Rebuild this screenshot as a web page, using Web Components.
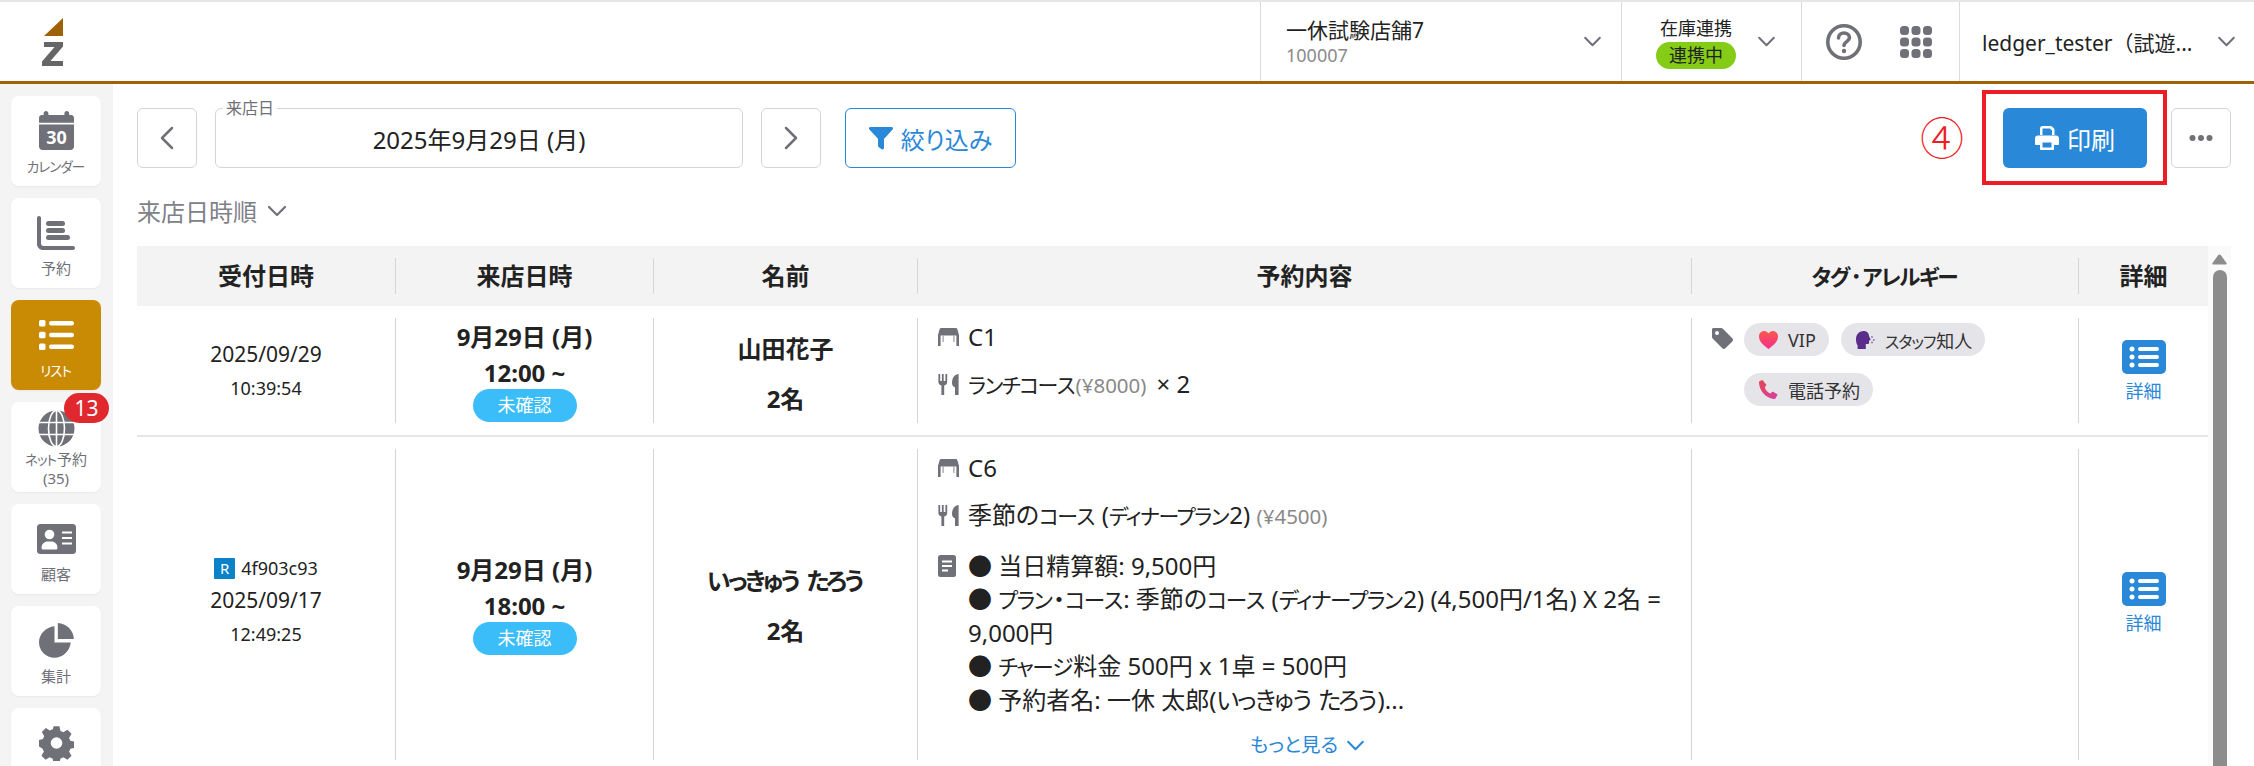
<!DOCTYPE html>
<html lang="ja">
<head>
<meta charset="utf-8">
<title>リスト</title>
<style>
    html, body {
        margin: 0;
        height: 766px;
        overflow: hidden;
        background: #fff;
        color: #222;
        font-family: "Noto Sans", "Noto Sans CJK JP", sans-serif;
        font-feature-settings: "palt";
    }

    .page {
        display: flex;
        height: 682px;
        overflow: hidden;
    }

    .main {
        flex: 1;
        min-width: 0;
        display: flex;
        flex-direction: column;
        padding: 24px 23px 0 24px;
    }
</style>
</head>
<body>
<z-header></z-header>
<div class="page">
    <z-sidenav>
        <z-nav-item label="カレンダー" icon="calendar"></z-nav-item>
        <z-nav-item label="予約" icon="chart"></z-nav-item>
        <z-nav-item label="リスト" icon="list" active></z-nav-item>
        <z-nav-item label="ネット予約" sub="(35)" icon="globe" badge="13"></z-nav-item>
        <z-nav-item label="顧客" icon="card"></z-nav-item>
        <z-nav-item label="集計" icon="pie"></z-nav-item>
        <z-nav-item icon="gear"></z-nav-item>
    </z-sidenav>
    <div class="main">
        <z-toolbar></z-toolbar>
        <z-sort></z-sort>
        <z-table>
            <z-row
                received="2025/09/29" time="10:39:54"
                visit="9月29日 (月)" hour="12:00 ~"
                name="山田花子" guests="2名" height="105">
                <z-seat>C1</z-seat>
                <z-course price="(¥8000)" qty="× 2">ランチコース</z-course>
                <z-tags slot="tags">
                    <z-tag kind="heart">VIP</z-tag>
                    <z-tag kind="head">スタッフ知人</z-tag>
                    <z-tag kind="phone">電話予約</z-tag>
                </z-tags>
            </z-row>
            <z-row
                ref="4f903c93"
                received="2025/09/17" time="12:49:25"
                visit="9月29日 (月)" hour="18:00 ~"
                name="いっきゅう たろう" guests="2名" height="306">
                <z-seat>C6</z-seat>
                <z-course price="(¥4500)">季節のコース (ディナープラン2)</z-course>
                <z-note>
                    <div>● 当日精算額: 9,500円</div>
                    <div>● プラン・コース: 季節のコース (ディナープラン2) (4,500円/1名) X 2名 = <span>9,000円</span></div>
                    <div>● チャージ料金 500円 x 1卓 = 500円</div>
                    <div>● 予約者名: 一休 太郎(いっきゅう たろう)...</div>
                </z-note>
            </z-row>
        </z-table>
    </div>
</div>

<script>
// kana in the reference are smaller and narrower than in the installed CJK font
const tight = (s) => s
    .replace(/[ァ-ヶー]+/g, (m) => `<span style="font-size:var(--kana,.9em)"><span style="letter-spacing:-.07em">${m.slice(0, -1)}</span>${m.slice(-1)}</span>`)
    .replace(/[ぁ-ん]+/g, (m) => `<span style="letter-spacing:var(--hira,-.07em)">${m.slice(0, -1)}</span>${m.slice(-1)}`);

const chevron = (size = 19, color = "#6f7078") => `
    <svg width="${size}" height="${Math.round(size * 0.6)}" viewBox="0 0 20 12" fill="none" stroke="${color}" stroke-width="2.2" stroke-linecap="round" stroke-linejoin="round"><path d="M2 2l8 8 8-8"/></svg>`;

const navIcons = {
    calendar: `<svg width="35" height="39" viewBox="0 0 35 39"><path fill="currentColor" d="M7 0c1.4 0 2.4 1 2.4 2.4V4h16V2.400c0-1.400 1-2.400 2.400-2.400s2.400 1 2.400 2.400V4H32c1.700 0 3 1.300 3 3v4.800H0V7c0-1.700 1.300-3 3-3h1.600V2.400C4.600 1 5.600 0 7 0zM0 13.400h35V35.500c0 1.900-1.500 3.500-3.500 3.500h-28C1.500 39 0 37.400 0 35.500z"/><text x="17.500" y="33" text-anchor="middle" font-size="18" font-weight="700" fill="#fff" font-family="Noto Sans, sans-serif">30</text></svg>`,
    chart: `<svg width="38" height="34" viewBox="0 0 38 34" fill="currentColor"><path d="M2 0c1.100 0 2 .9 2 2v25.500c0 1.400 1.100 2.500 2.500 2.500H36c1.100 0 2 .9 2 2s-.9 2-2 2H6c-3.300 0-6-2.700-6-6V2C0 .9.900 0 2 0z"/><rect x="9" y="5" width="19" height="5" rx="2.500"/><rect x="9" y="12" width="19" height="5" rx="2.500"/><rect x="9" y="19" width="24" height="5" rx="2.500"/></svg>`,
    list: `<svg width="35" height="30" viewBox="0 0 35 30" fill="currentColor"><rect x="0" y="0" width="6.500" height="6.500" rx="1.500"/><rect x="0" y="11.800" width="6.500" height="6.500" rx="1.500"/><rect x="0" y="23.500" width="6.500" height="6.500" rx="1.500"/><rect x="10" y="1" width="25" height="4.500" rx="2.200"/><rect x="10" y="12.800" width="25" height="4.500" rx="2.200"/><rect x="10" y="24.500" width="25" height="4.500" rx="2.200"/></svg>`,
    globe: `<svg width="37" height="37" viewBox="0 0 37 37"><circle cx="18.500" cy="18.500" r="18" fill="currentColor"/><g fill="none" stroke="#fff" stroke-width="1.600"><ellipse cx="18.500" cy="18.500" rx="8" ry="18"/><path d="M0 12.500h37M0 24.500h37M18.500 0v37"/></g></svg>`,
    card: `<svg width="39" height="30" viewBox="0 0 39 30"><rect width="39" height="30" rx="3.500" fill="currentColor"/><circle cx="12.500" cy="10.500" r="4.800" fill="#fff"/><path fill="#fff" d="M4.500 24c0-4.200 3-6.500 6-6.500h4c3 0 6 2.300 6 6.500 0 .8-.7 1.500-1.500 1.500H6c-.8 0-1.500-.7-1.500-1.500z"/><path stroke="#fff" stroke-width="1.800" d="M25 8.500h10M25 14h10M25 19.500h10"/></svg>`,
    pie: `<svg width="35" height="35" viewBox="0 0 35 35" fill="currentColor"><path d="M15.500 3.200V19.500H31.800C30.900 28 23.800 34.800 15.500 34.800 6.900 34.800 0 27.900 0 19.300 0 11 6.900 4 15.500 3.200z"/><path d="M18.800 0C27.500.3 34.500 7.300 34.800 16H18.800z"/></svg>`,
    gear: `<svg width="35" height="36" viewBox="0 0 24 24" fill="currentColor"><path fill-rule="evenodd" d="M10 0.500h4l.7 3.200c.7.200 1.400.5 2 .9l2.800-1.700 2.800 2.800-1.700 2.800c.4.600.7 1.300.9 2l3.200.7v4l-3.200.7c-.2.700-.5 1.400-.9 2l1.700 2.800-2.800 2.800-2.800-1.700c-.6.400-1.300.7-2 .9l-.7 3.200h-4l-.7-3.200c-.7-.2-1.400-.5-2-.9l-2.800 1.700-2.800-2.800 1.700-2.800c-.4-.6-.7-1.300-.9-2L-.500 14v-4l3.200-.7c.2-.7.5-1.400.9-2L1.900 4.500l2.800-2.800 2.800 1.700c.6-.4 1.300-.7 2-.9zM12 8a4 4 0 100 8 4 4 0 000-8z"/></svg>`
};

class ZHeader extends HTMLElement {
    constructor() {
        super();
        this.attachShadow({ mode: "open" });
        this.shadowRoot.innerHTML = `
            <style>
                :host {
                    display: flex;
                    height: 84px;
                    box-sizing: border-box;
                    border-top: 2px solid #e6e6e6;
                    border-bottom: 3px solid #a06208;
                    background: #fff;
                }
                .logo { width: 1260px; padding: 16px 0 0 42px; box-sizing: border-box; }
                .logo svg { display: block; }
                .cell {
                    display: flex;
                    align-items: center;
                    box-sizing: border-box;
                    border-left: 1px solid #dcdcdc;
                }
                .store { width: 361px; padding: 0 19px 0 25px; justify-content: space-between; }
                .store b { display: block; font-weight: 400; font-size: 21px; line-height: 27px; }
                .store small { display: block; font-size: 18px; line-height: 22px; color: #8a8a8a; }
                .stock { width: 180px; padding: 0 25px 0 34px; justify-content: space-between; }
                .stock .col { display: flex; flex-direction: column; align-items: center; }
                .stock span { font-size: 18px; line-height: 28px; }
                .stock i {
                    font-style: normal;
                    font-size: 18px;
                    line-height: 27px;
                    width: 80px;
                    text-align: center;
                    border-radius: 14px;
                    background: #84cc16;
                }
                .help { width: 158px; padding-left: 24px; gap: 38px; }
                .user {
                    flex: 1;
                    padding: 0 18px 0 22px;
                    justify-content: space-between;
                    font-size: 21px;
                    font-feature-settings: normal;
                }
            </style>
            <div class="logo">
                <svg width="22" height="50" viewBox="0 0 22 50">
                    <path fill="#a06208" d="M21 0v18H2z"/>
                    <path fill="#666" d="M2 24h19v4.500L8.500 43H21v5H0v-4.500L12.500 29H2z"/>
                </svg>
            </div>
            <div class="cell store">
                <div><b>一休試験店舗7</b><small>100007</small></div>
                ${chevron()}
            </div>
            <div class="cell stock">
                <div class="col"><span>在庫連携</span><i>連携中</i></div>
                ${chevron()}
            </div>
            <div class="cell help">
                <svg width="36" height="36" viewBox="0 0 36 36" fill="none">
                    <circle cx="18" cy="18" r="16.200" stroke="#6f7078" stroke-width="3.600"/>
                    <path d="M12.500 14c0-3 2.500-5 5.500-5s5.500 2 5.500 4.800c0 3.700-5.500 4-5.500 7.700" stroke="#6f7078" stroke-width="3.600" stroke-linecap="round"/>
                    <circle cx="18" cy="27" r="2.200" fill="#6f7078"/>
                </svg>
                <svg width="32" height="32" viewBox="0 0 32 32" fill="#6f7078">
                    <rect x="0" y="0" width="9" height="9" rx="3.500"/><rect x="11.500" y="0" width="9" height="9" rx="3.500"/><rect x="23" y="0" width="9" height="9" rx="3.500"/>
                    <rect x="0" y="11.500" width="9" height="9" rx="3.500"/><rect x="11.500" y="11.500" width="9" height="9" rx="3.500"/><rect x="23" y="11.500" width="9" height="9" rx="3.500"/>
                    <rect x="0" y="23" width="9" height="9" rx="3.500"/><rect x="11.500" y="23" width="9" height="9" rx="3.500"/><rect x="23" y="23" width="9" height="9" rx="3.500"/>
                </svg>
            </div>
            <div class="cell user"><span>ledger_tester（試遊...</span>${chevron()}</div>
        `;
    }
}

class ZSidenav extends HTMLElement {
    constructor() {
        super();
        this.attachShadow({ mode: "open" });
        this.shadowRoot.innerHTML = `
            <style>
                :host {
                    display: flex;
                    flex-direction: column;
                    gap: 12px;
                    width: 113px;
                    flex: none;
                    box-sizing: border-box;
                    padding: 12px 0 0 11px;
                    background: #f4f4f4;
                }
            </style>
            <slot></slot>
        `;
    }
}

class ZNavItem extends HTMLElement {
    constructor() {
        super();
        this.attachShadow({ mode: "open" });
    }

    connectedCallback() {
        const badge = this.getAttribute("badge");
        const sub = this.getAttribute("sub");
        const label = this.getAttribute("label");
        this.shadowRoot.innerHTML = `
            <style>
                :host {
                    display: flex;
                    flex: none;
                    flex-direction: column;
                    align-items: center;
                    position: relative;
                    width: 90px;
                    height: 90px;
                    box-sizing: border-box;
                    padding-top: ${sub ? 7 : 15}px;
                    border-radius: 8px;
                    background: #fff;
                    color: #6f7078;
                    box-shadow: 0 1px 2px rgba(0,0,0,.05);
                    font-size: 15px;
                    line-height: 18px;
                }
                :host([active]) { background: #c98a04; color: #fff; }
                .ic { height: 39px; display: flex; align-items: center; justify-content: center; margin-bottom: ${sub ? 2 : 7}px; }
                .badge {
                    position: absolute;
                    left: 53px;
                    top: -9px;
                    width: 45px;
                    height: 30px;
                    border-radius: 15px;
                    background: #e0282e;
                    color: #fff;
                    font-size: 21px;
                    line-height: 30px;
                    text-align: center;
                }
            </style>
            <div class="ic">${navIcons[this.getAttribute("icon")]}</div>
            ${label ? `<div>${tight(label)}</div>` : ""}
            ${sub ? `<div>${sub}</div>` : ""}
            ${badge ? `<div class="badge">${badge}</div>` : ""}
        `;
    }
}

class ZToolbar extends HTMLElement {
    constructor() {
        super();
        this.attachShadow({ mode: "open" });
        this.shadowRoot.innerHTML = `
            <style>
                :host { display: flex; flex: none; height: 60px; align-items: stretch; }
                .btn {
                    display: flex;
                    align-items: center;
                    justify-content: center;
                    box-sizing: border-box;
                    width: 60px;
                    border: 1px solid #d4d4d4;
                    border-radius: 6px;
                    background: #fff;
                }
                .date {
                    position: relative;
                    width: 528px;
                    margin: 0 18px;
                    display: flex;
                    align-items: center;
                    justify-content: center;
                    box-sizing: border-box;
                    border: 1px solid #d4d4d4;
                    border-radius: 6px;
                    font-size: 24px;
                }
                .date label {
                    position: absolute;
                    left: 7px;
                    top: -11px;
                    padding: 0 3px;
                    background: #fff;
                    font-size: 16px;
                    line-height: 20px;
                    color: #6f7078;
                }
                .filter {
                    width: 171px;
                    margin-left: 24px;
                    gap: 8px;
                    border-color: #2a88d8;
                    color: #2a88d8;
                    font-size: 24px;
                }
                .mark {
                    margin-left: auto;
                    margin-right: 39px;
                    align-self: center;
                    color: #ee1c25;
                    font-size: 44px;
                    line-height: 48px;
                    font-weight: 300;
                }
                .print-wrap { position: relative; display: flex; width: 144px; margin-right: 24px; }
                .print {
                    width: 100%;
                    gap: 8px;
                    border: 0;
                    background: #2a88d8;
                    color: #fff;
                    font-size: 24px;
                }
                .ring {
                    position: absolute;
                    left: -21px;
                    right: -20px;
                    top: -18px;
                    bottom: -17px;
                    border: 4px solid #ee1c25;
                }
            </style>
            <div class="btn"><svg width="16" height="26" viewBox="0 0 16 26" fill="none" stroke="#6f7078" stroke-width="2.500" stroke-linecap="round" stroke-linejoin="round"><path d="M13 3L3 13l10 10"/></svg></div>
            <div class="date"><label>来店日</label>2025年9月29日 (月)</div>
            <div class="btn"><svg width="16" height="26" viewBox="0 0 16 26" fill="none" stroke="#6f7078" stroke-width="2.500" stroke-linecap="round" stroke-linejoin="round"><path d="M3 3l10 10L3 23"/></svg></div>
            <div class="btn filter">
                <svg width="24" height="24" viewBox="0 0 24 24" fill="#2a88d8"><path d="M1.500 1h21c1.300 0 2 1.500 1.100 2.500L15 13v9c0 1.200-1.400 1.900-2.400 1.200l-3-2.200c-.4-.3-.6-.7-.6-1.200v-7L.4 3.500C-.5 2.500.2 1 1.500 1z"/></svg>
                <span>絞り込み</span>
            </div>
            <div class="mark">④</div>
            <div class="print-wrap">
                <div class="btn print">
                    <svg width="24" height="24" viewBox="0 0 24 24" fill="#fff"><path d="M5 9V2.500C5 1.100 6.100 0 7.500 0h8c.7 0 1.300.3 1.800.7l1.500 1.500c.5.5.7 1.100.7 1.800v5h-2.500V4.500L15 2.500H7.500V9z"/><path d="M3 9.500h18c1.700 0 3 1.300 3 3V18c0 .6-.4 1-1 1h-4v4c0 .6-.4 1-1 1H6c-.6 0-1-.4-1-1v-4H1c-.6 0-1-.4-1-1v-5.500c0-1.700 1.300-3 3-3zM7.500 16.500v5h9v-5z"/></svg>
                    印刷
                </div>
                <div class="ring"></div>
            </div>
            <div class="btn more"><svg width="24" height="6" viewBox="0 0 24 6" fill="#6f7078"><circle cx="3.500" cy="3" r="3"/><circle cx="12" cy="3" r="3"/><circle cx="20.500" cy="3" r="3"/></svg></div>
        `;
    }
}

class ZSort extends HTMLElement {
    constructor() {
        super();
        this.attachShadow({ mode: "open" });
        this.shadowRoot.innerHTML = `
            <style>
                :host {
                    display: flex;
                    flex: none;
                    align-items: center;
                    gap: 10px;
                    height: 78px;
                    box-sizing: border-box;
                    padding-top: 7px;
                    color: #808188;
                    font-size: 24px;
                }
            </style>
            来店日時順 ${chevron(20)}
        `;
    }
}

class ZTable extends HTMLElement {
    constructor() {
        super();
        this.attachShadow({ mode: "open" });
        this.shadowRoot.innerHTML = `
            <style>
                :host {
                    display: flex;
                    flex: 1;
                    min-height: 0;
                    --cols: 258px 258px 264px 774px 387px 130px;
                }
                .body { width: 2071px; flex: none; }
                .head {
                    display: grid;
                    grid-template-columns: var(--cols);
                    height: 60px;
                    box-sizing: border-box;
                    padding: 12px 0;
                    background: #f3f3f3;
                    font-size: 24px;
                    font-weight: 700;
                    line-height: 35px;
                    text-align: center;
                }
                .head div + div { border-left: 1px solid #d5d5d5; }
                .bar {
                    flex: 1;
                    display: flex;
                    flex-direction: column;
                    align-items: center;
                    background: #fafafa;
                    padding-top: 8px;
                    gap: 5px;
                }
                .bar svg { flex: none; }
                .thumb { width: 14px; flex: 1; background: #8c8c8c; border-radius: 7px 7px 0 0; }
            </style>
            <div class="body">
                <div class="head">
                    <div>受付日時</div><div>来店日時</div><div>名前</div><div>予約内容</div><div>${tight("タグ･アレルギー")}</div><div>詳細</div>
                </div>
                <slot></slot>
            </div>
            <div class="bar">
                <svg width="15" height="11" viewBox="0 0 15 11" fill="#8c8c8c"><path d="M7.500.5c.5 0 .9.2 1.200.6l5.800 7.800c.5.800 0 1.600-.9 1.600H1.400c-.9 0-1.400-.8-.9-1.600L6.300 1.100c.3-.4.700-.6 1.200-.6z"/></svg>
                <div class="thumb"></div>
            </div>
        `;
    }
}

class ZRow extends HTMLElement {
    constructor() {
        super();
        this.attachShadow({ mode: "open" });
    }

    connectedCallback() {
        const ref = this.getAttribute("ref");
        this.shadowRoot.innerHTML = `
            <style>
                :host {
                    display: grid;
                    grid-template-columns: var(--cols);
                    padding: 12px 0;
                    border-bottom: 2px solid #e6e6e6;
                }
                .cell {
                    min-height: ${this.getAttribute("height")}px;
                    box-sizing: border-box;
                    display: flex;
                    flex-direction: column;
                    align-items: center;
                    justify-content: center;
                }
                .cell + .cell { border-left: 1px solid #d5d5d5; }
                .received { font-size: 21px; line-height: 30px; padding: ${ref ? "0 0 5px" : "4px 0 0"}; }
                .received .t { font-size: 18px; line-height: 35px; margin-top: 2px; }
                .ref { display: flex; align-items: center; gap: 6px; font-size: 18px; line-height: 33px; }
                .ref i {
                    width: 21px;
                    line-height: 21px;
                    font-style: normal;
                    font-size: 15px;
                    text-align: center;
                    border-radius: 1px;
                    background: #0a82c8;
                    color: #fff;
                }
                .visit { font-size: 24px; font-weight: 700; line-height: 36px; padding-bottom: ${ref ? 2 : 0}px; }
                .pill {
                    width: 104px;
                    height: 33px;
                    margin-top: -2px;
                    border-radius: 17px;
                    background: #3bbdf9;
                    color: #fff;
                    font-size: 18px;
                    font-weight: 400;
                    line-height: 33px;
                    text-align: center;
                }
                .who { --hira: -.11em; font-size: 24px; font-weight: 700; line-height: 36px; padding-top: ${ref ? 3 : 6}px; }
                .who div + div { margin-top: 14px; text-align: center; }
                .plan { align-items: stretch; justify-content: flex-start; padding-left: 20px; padding-right: 14px; }
                .tags { align-items: flex-start; justify-content: flex-start; padding: 5px 0 0 20px; }
                .more {
                    align-self: center;
                    display: flex;
                    align-items: center;
                    gap: 8px;
                    margin-top: 14px;
                    color: #2a88d8;
                    font-size: 19.500px;
                    line-height: 30px;
                }
                .detail { color: #2a88d8; font-size: 18px; line-height: 26px; gap: 4px; padding: ${ref ? "0 0 2px" : "2px 0 0"}; }
                svg { display: block; }
            </style>
            <div class="cell received">
                ${ref ? `<div class="ref"><i>R</i>${ref}</div>` : ""}
                <div>${this.getAttribute("received")}</div>
                <div class="t">${this.getAttribute("time")}</div>
            </div>
            <div class="cell visit">
                <div>${this.getAttribute("visit")}</div>
                <div>${this.getAttribute("hour")}</div>
                <div class="pill">未確認</div>
            </div>
            <div class="cell who">
                <div>${tight(this.getAttribute("name"))}</div>
                <div>${this.getAttribute("guests")}</div>
            </div>
            <div class="cell plan">
                <slot></slot>
                ${ref ? `<div class="more">もっと見る ${chevron(19, "#2a88d8")}</div>` : ""}
            </div>
            <div class="cell tags"><slot name="tags"></slot></div>
            <div class="cell detail">
                <svg width="44" height="34" viewBox="0 0 44 34">
                    <rect width="44" height="34" rx="5" fill="#2a88d8"/>
                    <g fill="#fff"><circle cx="10" cy="9" r="2.500"/><circle cx="10" cy="17" r="2.500"/><circle cx="10" cy="25" r="2.500"/>
                    <rect x="16" y="7" width="21" height="4" rx="2"/><rect x="16" y="15" width="21" height="4" rx="2"/><rect x="16" y="23" width="21" height="4" rx="2"/></g>
                </svg>
                詳細
            </div>
        `;
    }
}

class ZSeat extends HTMLElement {
    constructor() {
        super();
        this.attachShadow({ mode: "open" });
        this.shadowRoot.innerHTML = `
            <style>
                :host { display: flex; align-items: center; gap: 9px; height: 36px; margin-top: 1px; font-size: 24px; line-height: 36px; }
                svg { flex: none; }
            </style>
            <svg width="21" height="18" viewBox="0 0 21 18"><path fill="#6f7078" d="M3.500 0h14c.9 0 1.600.5 1.900 1.300L21 7v11h-2.600V7.500H2.600V18H0V7l1.600-5.700C1.900.5 2.600 0 3.500 0z"/><path fill="#9a9ba1" d="M4.500 7.500h1.200V14H4.500zM15.300 7.500h1.200V14h-1.200z"/></svg>
            <slot></slot>
        `;
    }
}

class ZCourse extends HTMLElement {
    constructor() {
        super();
        this.attachShadow({ mode: "open" });
    }

    connectedCallback() {
        this.innerHTML = tight(this.innerHTML);
        const qty = this.getAttribute("qty");
        this.shadowRoot.innerHTML = `
            <style>
                :host { --kana: .87em; display: flex; align-items: center; gap: 9px; height: 36px; margin-top: 11px; font-size: 24px; line-height: 36px; }
                svg { flex: none; }
                .price { color: #888; font-size: 20.500px; }
                .qty { margin-left: 10px; }
            </style>
            <svg width="21" height="21" viewBox="0 0 21 21" fill="#6f7078"><path d="M.4 0h1.800v7h1.700V0h1.800v7h1.700V0h1.800v8c0 1.900-1.200 3.100-3 3.500V21H3.400V11.500C1.600 11.100.4 9.900.4 8zM20 0c-3.800.8-6 4.300-6 9 0 2.400 1.100 3.800 3 4.300V21h3.600V.5c0-.3-.1-.6-.6-.5z"/></svg>
            <span><slot></slot>${qty ? "" : " "}<span class="price">${this.getAttribute("price")}</span>${qty ? `<span class="qty">${qty}</span>` : ""}</span>
        `;
    }
}

class ZNote extends HTMLElement {
    constructor() {
        super();
        this.attachShadow({ mode: "open" });
    }

    connectedCallback() {
        this.innerHTML = tight(this.innerHTML);
        this.shadowRoot.innerHTML = `
            <style>
                :host { display: flex; gap: 12px; margin-top: 16px; font-size: 24px; line-height: 33px; }
                svg { flex: none; margin-top: 6px; }
            </style>
            <svg width="18" height="22" viewBox="0 0 18 22"><rect width="18" height="22" rx="2.500" fill="#6f7078"/><path d="M4 6.500h10M4 11h10M4 15.500h6" stroke="#fff" stroke-width="1.800"/></svg>
            <div><slot></slot></div>
        `;
    }
}

class ZTags extends HTMLElement {
    constructor() {
        super();
        this.attachShadow({ mode: "open" });
        this.shadowRoot.innerHTML = `
            <style>
                :host { display: flex; gap: 11px; }
                svg { flex: none; margin-top: 5px; }
                .wrap { display: flex; flex-wrap: wrap; gap: 17px 12px; width: 335px; }
            </style>
            <svg width="21" height="21" viewBox="0 0 21 21"><path fill="#6f7078" d="M1.500 0H9c.6 0 1.200.2 1.600.6l9.700 9.700c.9.900.9 2.200 0 3.100l-6.900 6.900c-.9.900-2.200.9-3.100 0L.6 10.600C.2 10.200 0 9.600 0 9V1.500C0 .7.700 0 1.500 0zM5 3a2 2 0 100 4 2 2 0 000-4z" fill-rule="evenodd"/></svg>
            <div class="wrap"><slot></slot></div>
        `;
    }
}

const tagIcons = {
    heart: `<svg width="19" height="18" viewBox="0 0 19 18"><defs><linearGradient id="h" x1="0" y1="0" x2="0" y2="1"><stop offset="0" stop-color="#f9584b"/><stop offset="1" stop-color="#f62e8e"/></linearGradient></defs><path fill="url(#h)" d="M9.500 18C5 14.500 0 11 0 5.500 0 2.300 2.300 0 5.200 0 7 0 8.600.9 9.500 2.400 10.400.9 12 0 13.800 0 16.700 0 19 2.300 19 5.500 19 11 14 14.500 9.500 18z"/></svg>`,
    head: `<svg width="19" height="18" viewBox="0 0 19 18"><path fill="#5a2c8c" d="M7.500 0C11 0 13 2.200 13 5l1.600 3.600c.1.400-.1.600-.6.700l-.9.200v2.200c0 .9-.8 1.500-1.600 1.400l-1.700-.2V18H1.600v-3.500C.6 13 0 11 0 8.500 0 3.500 3 0 7.500 0z"/><g fill="#8a6fb0"><circle cx="16" cy="6" r=".9"/><circle cx="17.800" cy="9" r=".9"/><circle cx="16" cy="11.500" r=".9"/></g></svg>`,
    phone: `<svg width="19" height="19" viewBox="0 0 19 19"><defs><linearGradient id="p" x1="0" y1="0" x2="1" y2="1"><stop offset="0" stop-color="#e5484d"/><stop offset="1" stop-color="#d93fa8"/></linearGradient></defs><path fill="url(#p)" d="M3.500 0L.8 1C0 1.300-.1 2 0 3c.7 8 6.500 14.500 14.500 16 1 .2 1.900-.2 2.200-1l2-3.500-5-3-2.300 2C8.500 12.500 6.500 9.800 5.800 7.300L7.500 5z"/></svg>`
};

class ZTag extends HTMLElement {
    constructor() {
        super();
        this.attachShadow({ mode: "open" });
    }

    connectedCallback() {
        this.innerHTML = tight(this.innerHTML);
        this.shadowRoot.innerHTML = `
            <style>
                :host {
                    display: inline-flex;
                    align-items: center;
                    gap: 10px;
                    height: 33px;
                    padding: 0 13px 0 15px;
                    border-radius: 17px;
                    background: #e5e5e9;
                    font-size: 18px;
                    color: #333;
                }
            </style>
            ${tagIcons[this.getAttribute("kind")]}
            <span><slot></slot></span>
        `;
    }
}

customElements.define("z-header", ZHeader);
customElements.define("z-sidenav", ZSidenav);
customElements.define("z-nav-item", ZNavItem);
customElements.define("z-toolbar", ZToolbar);
customElements.define("z-sort", ZSort);
customElements.define("z-table", ZTable);
customElements.define("z-row", ZRow);
customElements.define("z-seat", ZSeat);
customElements.define("z-course", ZCourse);
customElements.define("z-note", ZNote);
customElements.define("z-tags", ZTags);
customElements.define("z-tag", ZTag);
</script>
</body>
</html>
